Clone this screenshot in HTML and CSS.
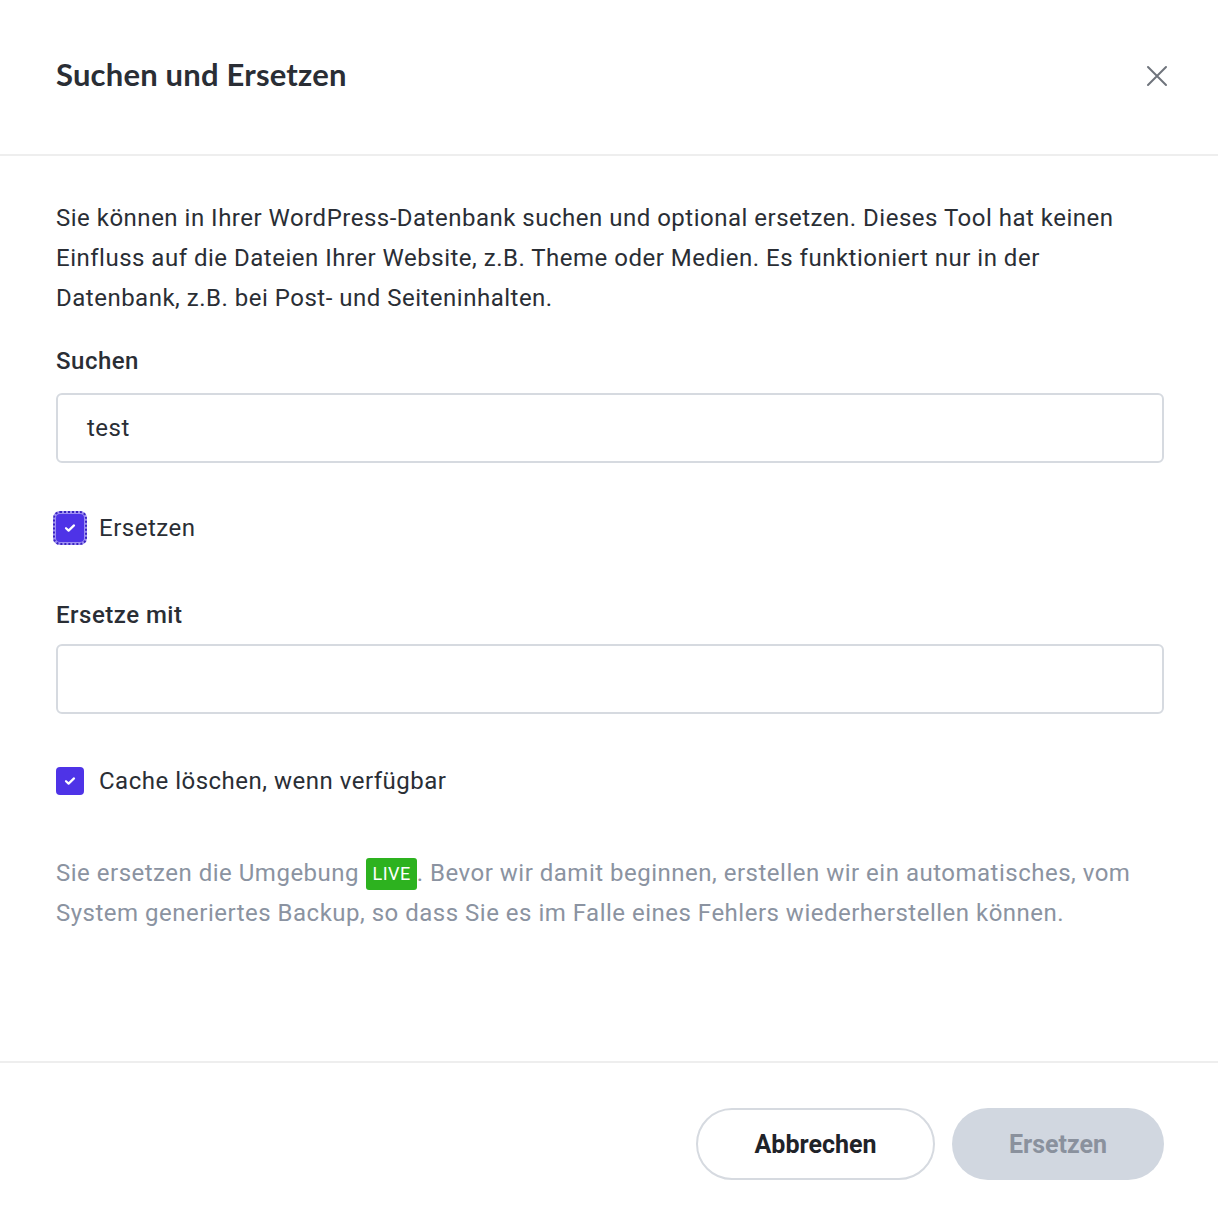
FILE: index.html
```html
<!DOCTYPE html>
<html lang="de">
<head>
<meta charset="utf-8">
<title>Suchen und Ersetzen</title>
<link rel="stylesheet" href="styles.css">
</head>
<body>
<div class="modal">
  <header class="modal-header">
    <h1 class="modal-title">Suchen und Ersetzen</h1>
    <button class="close-btn" aria-label="Schließen">
      <svg width="22" height="22" viewBox="0 0 22 22"><path d="M2 2 L20 20 M20 2 L2 20" stroke="#6f747c" stroke-width="2" stroke-linecap="round" fill="none"/></svg>
    </button>
  </header>
  <main class="modal-body">
    <p class="intro">Sie können in Ihrer WordPress-Datenbank suchen und optional ersetzen. Dieses Tool hat keinen Einfluss auf die Dateien Ihrer Website, z.B. Theme oder Medien. Es funktioniert nur in der Datenbank, z.B. bei Post- und Seiteninhalten.</p>

    <label class="field-label label-search">Suchen</label>
    <div class="input">test</div>

    <div class="check-row row-replace">
      <span class="checkbox focused">
        <svg width="12" height="10" viewBox="0 0 12 10"><path d="M2 5.2 L4.6 7.6 L10 2.4" stroke="#fff" stroke-width="2.2" stroke-linecap="round" stroke-linejoin="round" fill="none"/></svg>
      </span>
      <span class="check-label">Ersetzen</span>
    </div>

    <label class="field-label label-replace">Ersetze mit</label>
    <div class="input"></div>

    <div class="check-row row-cache">
      <span class="checkbox">
        <svg width="12" height="10" viewBox="0 0 12 10"><path d="M2 5.2 L4.6 7.6 L10 2.4" stroke="#fff" stroke-width="2.2" stroke-linecap="round" stroke-linejoin="round" fill="none"/></svg>
      </span>
      <span class="check-label">Cache löschen, wenn verfügbar</span>
    </div>

    <p class="note">Sie ersetzen die Umgebung <span class="badge">LIVE</span>. Bevor wir damit beginnen, erstellen wir ein automatisches, vom System generiertes Backup, so dass Sie es im Falle eines Fehlers wiederherstellen können.</p>
  </main>
  <footer class="modal-footer">
    <button class="btn btn-secondary">Abbrechen</button>
    <button class="btn btn-disabled">Ersetzen</button>
  </footer>
</div>
</body>
</html>
```

FILE: styles.css
```css
* { box-sizing: border-box; }
html, body { margin: 0; padding: 0; background: #ffffff; }
body {
  font-family: Roboto, "Liberation Sans", sans-serif;
  color: #2a2e35;
  width: 1218px;
  height: 1220px;
  overflow: hidden;
}
.modal {
  display: flex;
  flex-direction: column;
  height: 1220px;
}
.modal-header {
  height: 156px;
  border-bottom: 2px solid #eeeeee;
  display: flex;
  align-items: center;
  justify-content: space-between;
  padding: 0 50px 6px 56px;
}
.modal-title {
  margin: 0;
  font-family: Lato, "Open Sans", sans-serif;
  font-weight: 700;
  font-size: 31px;
  color: #2a2e35;
  letter-spacing: 0.2px;
}
.close-btn {
  background: none;
  border: 0;
  padding: 0;
  width: 22px;
  height: 22px;
  display: flex;
  margin-top: 4px;
}
.modal-body {
  flex: 1;
  padding: 42px 54px 0 56px;
  letter-spacing: 0.5px;
}
.intro {
  margin: 0;
  font-size: 24px;
  line-height: 40px;
}
.field-label {
  display: block;
  font-size: 24px;
  font-weight: 500;
  line-height: 30px;
  color: #2a2e35;
}
.label-search { margin-top: 28px; margin-bottom: 17px; }
.label-replace { margin-top: 52px; margin-bottom: 14px; }
.input {
  height: 70px;
  border: 2px solid #d6dae0;
  border-radius: 6px;
  padding: 0 29px;
  font-size: 24px;
  line-height: 66px;
  color: #2a2e35;
}
.check-row {
  display: flex;
  align-items: center;
  height: 40px;
  gap: 15px;
}
.row-replace { margin-top: 45px; }
.row-cache { margin-top: 47px; }
.checkbox {
  width: 28px;
  height: 28px;
  flex: none;
  border-radius: 4px;
  background: #4e33e7;
  display: flex;
  align-items: center;
  justify-content: center;
}
.checkbox.focused {
  outline: 2px dotted #3a25c0;
  outline-offset: 1px;
  box-shadow: 0 0 0 3px rgba(78, 51, 231, 0.55);
}
.check-label {
  font-size: 24px;
  color: #2a2e35;
}
.note {
  margin: 52px 0 0;
  font-size: 24px;
  line-height: 40px;
  color: #8b93a1;
}
.badge {
  display: inline-block;
  background: #2db21f;
  color: #ffffff;
  font-size: 18px;
  letter-spacing: 0.5px;
  line-height: 32px;
  height: 32px;
  padding: 0 6px 0 7px;
  border-radius: 3px;
  vertical-align: 1px;
}
.modal-footer {
  border-top: 2px solid #eeeeee;
  height: 159px;
  display: flex;
  justify-content: flex-end;
  align-items: flex-start;
  gap: 17px;
  padding: 45px 54px 0 56px;
}
.btn {
  height: 72px;
  border-radius: 36px;
  font-family: Roboto, "Liberation Sans", sans-serif;
  font-size: 25px;
  font-weight: 700;
}
.btn-secondary {
  width: 239px;
  background: #ffffff;
  border: 2px solid #d6dae0;
  color: #1f2329;
}
.btn-disabled {
  width: 212px;
  background: #d1d7e0;
  border: 0;
  color: #8a919d;
}
```
